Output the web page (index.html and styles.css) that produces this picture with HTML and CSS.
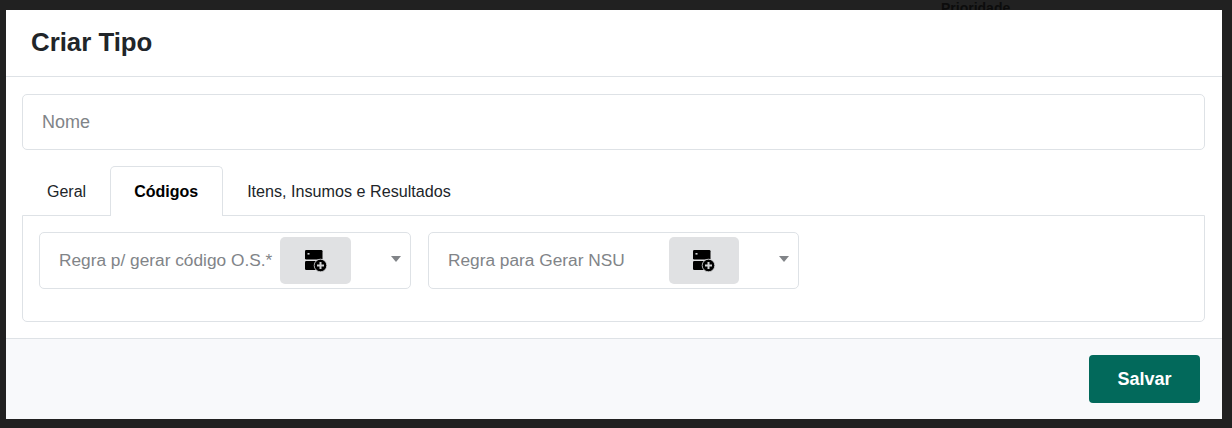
FILE: index.html
```html
<!DOCTYPE html>
<html lang="pt-BR">
<head>
<meta charset="UTF-8">
<meta name="viewport" content="width=device-width, initial-scale=1.0">
<title>Criar Tipo</title>
<link rel="stylesheet" href="styles.css">
</head>
<body>
  <span class="behind-label">Prioridade</span>
  <div class="modal">
    <div class="modal-header">
      <h2>Criar Tipo</h2>
    </div>
    <div class="modal-body">
      <div class="name-field">Nome</div>
      <div class="tabs">
        <div class="tab">Geral</div>
        <div class="tab active">Códigos</div>
        <div class="tab long">Itens, Insumos e Resultados</div>
      </div>
      <div class="tab-panel">
        <div class="select-box first">
          <span class="select-label">Regra p/ gerar código O.S.*</span>
          <button class="add-btn">
            <svg width="22" height="22" viewBox="0 0 22 22"><rect x="0" y="0" width="17.500" height="9.500" rx="1.200" fill="#000"/><rect x="0" y="11" width="17.500" height="9" rx="1.200" fill="#000"/><rect x="2.500" y="3" width="2" height="1.600" fill="#d0d1d3"/><circle cx="15.500" cy="15.500" r="6.300" fill="#000" stroke="#e0e1e3" stroke-width="0.800"/><path d="M15.500 12v7M12 15.500h7" stroke="#d0d1d3" stroke-width="2"/></svg>
          </button>
          <span class="caret"></span>
        </div>
        <div class="select-box second">
          <span class="select-label">Regra para Gerar NSU</span>
          <button class="add-btn">
            <svg width="22" height="22" viewBox="0 0 22 22"><rect x="0" y="0" width="17.500" height="9.500" rx="1.200" fill="#000"/><rect x="0" y="11" width="17.500" height="9" rx="1.200" fill="#000"/><rect x="2.500" y="3" width="2" height="1.600" fill="#d0d1d3"/><circle cx="15.500" cy="15.500" r="6.300" fill="#000" stroke="#e0e1e3" stroke-width="0.800"/><path d="M15.500 12v7M12 15.500h7" stroke="#d0d1d3" stroke-width="2"/></svg>
          </button>
          <span class="caret"></span>
        </div>
      </div>
    </div>
    <div class="modal-footer">
      <button class="save-btn">Salvar</button>
    </div>
  </div>
</body>
</html>
```

FILE: styles.css
```css
html, body {
  height: 100%;
}
body {
  font-family: "Liberation Sans", Arial, sans-serif;
  background-color: #212121;
  color: #212529;
  margin: 0;
  padding: 10px 10px 9px 6px;
  box-sizing: border-box;
  overflow: hidden;
  position: relative;
}
.behind-label {
  position: absolute;
  left: 941px;
  top: 0;
  font-size: 14px;
  font-weight: bold;
  color: #0c0c0c;
}
.modal {
  position: relative;
  background-color: #fff;
  height: 409px;
  display: flex;
  flex-direction: column;
}
.modal-header {
  flex: none;
  height: 64px;
  border-bottom: 1px solid #dee2e6;
  padding: 0 0 2px 25px;
  display: flex;
  align-items: center;
}
h2 {
  font-size: 25.8px;
  line-height: 32px;
  margin: 0;
  font-weight: bold;
  color: #212529;
}
.modal-body {
  flex: 1;
  padding: 17px 17px 16px 16px;
}
.name-field {
  height: 54px;
  line-height: 54px;
  border: 1px solid #dee2e6;
  border-radius: 5px;
  padding-left: 19px;
  font-size: 18px;
  color: #818488;
}
.tabs {
  display: flex;
  margin-top: 16px;
  padding-left: 1px;
  height: 50px;
  position: relative;
  z-index: 1;
}
.tab {
  padding: 0 23px;
  height: 50px;
  line-height: 50px;
  box-sizing: border-box;
  border: 1px solid transparent;
  border-bottom: 0;
  font-size: 16px;
  color: #212529;
}
.tab.active {
  font-weight: bold;
  color: #000;
  background-color: #fff;
  border-color: #dee2e6;
  border-radius: 5px 5px 0 0;
  padding-right: 24px;
}
.tab.long {
  font-size: 16.15px;
  line-height: 48px;
}
.tab-panel {
  margin-top: -1px;
  height: 107px;
  border: 1px solid #dee2e6;
  border-radius: 0 0 5px 5px;
  padding: 16px;
  box-sizing: border-box;
  display: flex;
  gap: 17px;
}
.select-box {
  height: 57px;
  box-sizing: border-box;
  border: 1px solid #dee2e6;
  border-radius: 5px;
  display: flex;
  align-items: center;
  padding-left: 19px;
  position: relative;
  color: #818488;
}
.select-box.first {
  width: 372px;
}
.select-box.second {
  width: 371px;
}
.select-label {
  white-space: nowrap;
  font-size: 17.3px;
}
.select-box.first .add-btn {
  margin-left: 8px;
}
.select-box.second .add-btn {
  margin-left: 44px;
  width: 70px;
}
.add-btn {
  flex: none;
  width: 71px;
  height: 47px;
  background-color: #e0e1e3;
  border: none;
  border-radius: 5px;
  padding: 0;
  display: flex;
  align-items: center;
  justify-content: center;
}
.caret {
  position: absolute;
  right: 9px;
  top: 23px;
  width: 0;
  height: 0;
  border-left: 5.500px solid transparent;
  border-right: 5.500px solid transparent;
  border-top: 6px solid #818488;
}
.modal-footer {
  flex: none;
  box-sizing: border-box;
  height: 81px;
  border-top: 1px solid #dee2e6;
  background-color: #f8f9fb;
  display: flex;
  justify-content: flex-end;
  align-items: flex-start;
  padding: 16px 22px 0 0;
}
.save-btn {
  width: 111px;
  height: 48px;
  background-color: #02695b;
  color: #fff;
  border: none;
  border-radius: 4px;
  font-family: inherit;
  font-size: 18px;
  font-weight: bold;
}
```
